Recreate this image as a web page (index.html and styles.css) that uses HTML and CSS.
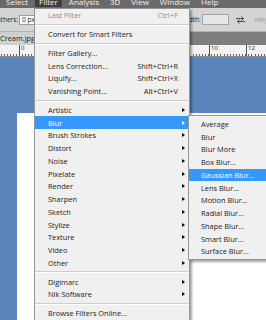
FILE: index.html
```html
<!DOCTYPE html>
<html lang="en">
<head>
  <meta charset="UTF-8">
  <meta name="viewport" content="width=device-width, initial-scale=1.0">
  <title>Filter Menu</title>
  <link rel="stylesheet" href="styles.css">
</head>
<body>
  <div id="app">
    <div id="menubar">
      <span class="menubar-item">Select</span>
      <span class="menubar-item active">Filter</span>
      <span class="menubar-item">Analysis</span>
      <span class="menubar-item">3D</span>
      <span class="menubar-item">View</span>
      <span class="menubar-item">Window</span>
      <span class="menubar-item">Help</span>
    </div>

    <div id="options-bar">
      <span class="opt-label feather-label">athers:</span>
      <span class="opt-input">0 px</span>
      <span class="opt-label width-label">Width:</span>
      <span class="opt-input disabled"></span>
      <svg class="swap-icon" width="9" height="8" viewBox="0 0 9 8">
        <path d="M0 2.5h7.5M5.5 0.5l2 2-2 2M9 5.5H1.5M3.5 3.5l-2 2 2 2" stroke="#4a4a4a" fill="none" stroke-width="1"/>
      </svg>
      <span class="opt-label muted">Height:</span>
    </div>

    <div id="tab-bar">
      <div class="doc-tab">Cream.jpg</div>
    </div>

    <div id="ruler">
      <div class="ruler-cell start"></div>
      <div class="ruler-cell">0</div>
      <div class="ruler-cell">10</div>
      <div class="ruler-cell">12</div>
    </div>

    <div id="workspace">
      <div id="document"></div>
    </div>

    <div id="filter-menu" class="menu">
      <div class="menu-item disabled"><span>Last Filter</span><span class="shortcut">Ctrl+F</span></div>
      <div class="menu-sep"></div>
      <div class="menu-item"><span>Convert for Smart Filters</span></div>
      <div class="menu-sep"></div>
      <div class="menu-item"><span>Filter Gallery...</span></div>
      <div class="menu-item"><span>Lens Correction...</span><span class="shortcut">Shift+Ctrl+R</span></div>
      <div class="menu-item"><span>Liquify...</span><span class="shortcut">Shift+Ctrl+X</span></div>
      <div class="menu-item"><span>Vanishing Point...</span><span class="shortcut">Alt+Ctrl+V</span></div>
      <div class="menu-sep"></div>
      <div class="menu-item"><span>Artistic</span><span class="arrow"></span></div>
      <div class="menu-item selected"><span>Blur</span><span class="arrow"></span></div>
      <div class="menu-item"><span>Brush Strokes</span><span class="arrow"></span></div>
      <div class="menu-item"><span>Distort</span><span class="arrow"></span></div>
      <div class="menu-item"><span>Noise</span><span class="arrow"></span></div>
      <div class="menu-item"><span>Pixelate</span><span class="arrow"></span></div>
      <div class="menu-item"><span>Render</span><span class="arrow"></span></div>
      <div class="menu-item"><span>Sharpen</span><span class="arrow"></span></div>
      <div class="menu-item"><span>Sketch</span><span class="arrow"></span></div>
      <div class="menu-item"><span>Stylize</span><span class="arrow"></span></div>
      <div class="menu-item"><span>Texture</span><span class="arrow"></span></div>
      <div class="menu-item"><span>Video</span><span class="arrow"></span></div>
      <div class="menu-item"><span>Other</span><span class="arrow"></span></div>
      <div class="menu-sep"></div>
      <div class="menu-item"><span>Digimarc</span><span class="arrow"></span></div>
      <div class="menu-item"><span>Nik Software</span><span class="arrow"></span></div>
      <div class="menu-sep"></div>
      <div class="menu-item"><span>Browse Filters Online...</span></div>
    </div>

    <div id="blur-menu" class="menu">
      <div class="menu-item">Average</div>
      <div class="menu-item">Blur</div>
      <div class="menu-item">Blur More</div>
      <div class="menu-item">Box Blur...</div>
      <div class="menu-item selected">Gaussian Blur...</div>
      <div class="menu-item">Lens Blur...</div>
      <div class="menu-item">Motion Blur...</div>
      <div class="menu-item">Radial Blur...</div>
      <div class="menu-item">Shape Blur...</div>
      <div class="menu-item">Smart Blur...</div>
      <div class="menu-item">Surface Blur...</div>
    </div>
  </div>
</body>
</html>
```

FILE: styles.css
```css
body {
  margin: 0;
  padding: 0;
  font-family: "Open Sans", "Noto Sans", sans-serif;
  overflow: hidden;
}

#app {
  position: relative;
  width: 266px;
  height: 320px;
  display: flex;
  flex-direction: column;
  overflow: hidden;
}

/* top application menu, cut at the top edge */
#menubar {
  flex-shrink: 0;
  height: 8px;
  display: flex;
  gap: 3px;
  padding-left: 2px;
  background-color: #6a6a6a;
  overflow: hidden;
}

.menubar-item {
  display: block;
  height: 7px;
  padding: 0 4px;
  font-size: 8px;
  line-height: 3px;
  color: #f0f0f0;
  white-space: nowrap;
}

.menubar-item.active {
  background-color: #3e3e3e;
}

#options-bar {
  flex-shrink: 0;
  height: 23px;
  display: flex;
  align-items: center;
  background-color: #d4d4d4;
  font-size: 6.5px;
  color: #222;
  white-space: nowrap;
}

#options-bar > * {
  flex-shrink: 0;
}

.feather-label {
  margin-left: -3px;
}

.opt-input {
  box-sizing: border-box;
  width: 17px;
  height: 10px;
  margin-left: 1px;
  padding-left: 2px;
  line-height: 8px;
  background-color: #fff;
  border: 1px solid #9c9c9c;
}

.opt-input.disabled {
  width: 27px;
  height: 11px;
  background-color: #e6e6e6;
  border-color: #a4a4a4;
}

.width-label {
  margin-left: 145px;
}

.swap-icon {
  margin-left: 7px;
}

.opt-label.muted {
  margin-left: 10px;
  color: #9a9a9a;
}

#tab-bar {
  flex-shrink: 0;
  height: 14px;
  display: flex;
  background-color: #7e7e7e;
  border-top: 1px solid #b0b0b0;
  box-sizing: border-box;
}

.doc-tab {
  width: 40px;
  background-color: #d0d0d0;
  font-size: 7.4px;
  line-height: 13px;
  color: #222;
  white-space: nowrap;
}

#ruler {
  flex-shrink: 0;
  height: 11px;
  display: grid;
  grid-template-columns: 19px 190px 37px 1fr;
  background-color: #f2f2f2;
  background-image: repeating-linear-gradient(to right, #666 0 1px, transparent 1px 3.1px);
  background-size: 100% 2px;
  background-position: 19px 100%;
  background-repeat: repeat-x;
  border-bottom: 1px solid #8a8a8a;
}

.ruler-cell {
  border-left: 1px solid #555;
  padding-left: 1px;
  font-size: 6px;
  line-height: 7px;
  color: #222;
}

.ruler-cell.start {
  border-left: none;
}

#workspace {
  flex: 1;
  display: flex;
  padding: 56px 0 0 17px;
  background-color: #5a84bc;
}

#document {
  flex: 1;
  background-color: #fff;
}

/* dropdown menus */
.menu {
  position: absolute;
  box-sizing: border-box;
  background-color: #f0f0f0;
  border: 1px solid #979797;
  box-shadow: 2px 2px 2px rgba(0, 0, 0, 0.35);
  font-size: 7.4px;
  color: #1c1c1c;
}

#filter-menu {
  left: 34px;
  top: 8px;
  width: 156px;
}

#blur-menu {
  left: 188px;
  top: 115px;
  width: 100px;
  padding: 1.5px 0 1px;
}

.menu-item {
  display: flex;
  align-items: center;
  height: 12.75px;
  padding: 0 11px 0 13px;
  white-space: nowrap;
}

#blur-menu .menu-item {
  padding-left: 12px;
}

.menu-item .shortcut {
  margin-left: auto;
}

.menu-item .arrow {
  margin-left: auto;
  margin-right: -7px;
  width: 0;
  height: 0;
  border-left: 3px solid #000;
  border-top: 2.5px solid transparent;
  border-bottom: 2.5px solid transparent;
}

.menu-item.disabled {
  color: #8d8d8d;
}

.menu-item.selected {
  background-color: #3399ff;
  color: #fff;
}

.menu-item.selected .arrow {
  border-left-color: #fff;
}

.menu-sep {
  height: 6px;
  display: flex;
  align-items: center;
}

.menu-sep::before {
  content: "";
  flex: 1;
  height: 1px;
  background-color: #cdcdcd;
  border-bottom: 1px solid #fff;
}
```
